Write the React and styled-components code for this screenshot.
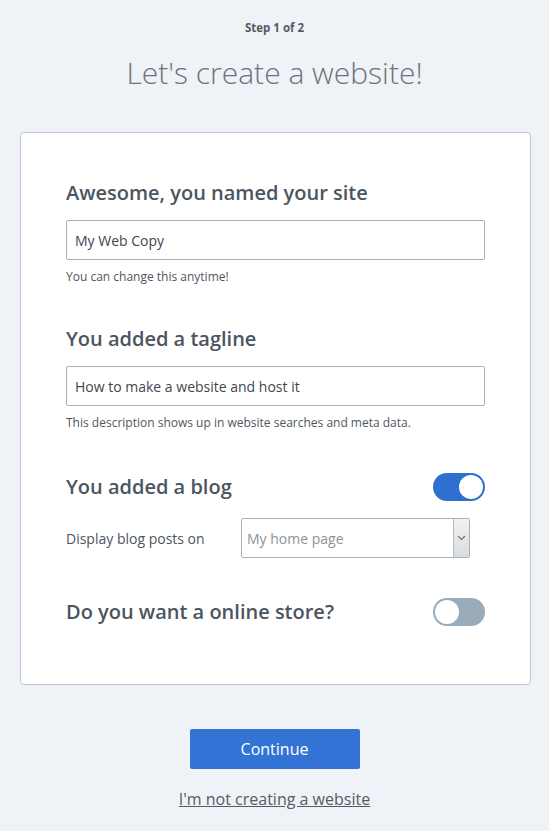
import React, { useState } from "react";
import styled, { createGlobalStyle } from "styled-components";

const GlobalStyle = createGlobalStyle`
  html, body {
    margin: 0;
    padding: 0;
    background: #eff2f6;
    font-family: "Open Sans", "Liberation Sans", sans-serif;
  }
`;

const App = () => {
  const [siteName, setSiteName] = useState("My Web Copy");
  const [tagline, setTagline] = useState("How to make a website and host it");
  const [blog, setBlog] = useState(true);
  const [store, setStore] = useState(false);

  return (
    <Page>
      <GlobalStyle />
      <StepLabel>Step 1 of 2</StepLabel>
      <Title>Let's create a website!</Title>

      <Card>
        <SectionTitle>Awesome, you named your site</SectionTitle>
        <TextInput
          value={siteName}
          onChange={(e) => setSiteName(e.target.value)}
        />
        <Hint>You can change this anytime!</Hint>

        <SectionTitle $spaced>You added a tagline</SectionTitle>
        <TextInput
          value={tagline}
          onChange={(e) => setTagline(e.target.value)}
        />
        <Hint>This description shows up in website searches and meta data.</Hint>

        <ToggleRow $top={41}>
          <SectionTitle>You added a blog</SectionTitle>
          <Toggle $on={blog} onClick={() => setBlog(!blog)} aria-label="Blog" />
        </ToggleRow>

        <SelectRow>
          <SelectLabel>Display blog posts on</SelectLabel>
          <SelectBox>
            <SelectValue>My home page</SelectValue>
            <SelectButton>
              <svg width="9" height="6" viewBox="0 0 9 6">
                <path
                  d="M1 1l3.5 3.5L8 1"
                  fill="none"
                  stroke="#6b7480"
                  strokeWidth="1.2"
                />
              </svg>
            </SelectButton>
          </SelectBox>
        </SelectRow>

        <ToggleRow $top={40}>
          <SectionTitle>Do you want a online store?</SectionTitle>
          <Toggle
            $on={store}
            onClick={() => setStore(!store)}
            aria-label="Online store"
          />
        </ToggleRow>
      </Card>

      <ContinueButton>Continue</ContinueButton>
      <SkipLink href="#">I'm not creating a website</SkipLink>
    </Page>
  );
};

const Page = styled.div`
  display: flex;
  flex-direction: column;
  align-items: center;
  padding: 20px 0 24px;
`;

const StepLabel = styled.div`
  font-size: 11.5px;
  line-height: 16px;
  font-weight: 700;
  color: #555b62;
`;

const Title = styled.h1`
  margin: 18px 0 0;
  font-size: 30px;
  line-height: 38px;
  font-weight: 300;
  color: #6c737c;
`;

const Card = styled.div`
  box-sizing: border-box;
  align-self: flex-start;
  width: 511px;
  margin: 40px 0 0 20px;
  padding: 46px 45px 58px 45px;
  background: #fff;
  border: 1px solid #bcc6d0;
  border-radius: 4px;
`;

const SectionTitle = styled.h2`
  margin: ${(p) => (p.$spaced ? "39px" : "0")} 0 0;
  font-size: 20px;
  line-height: 28px;
  font-weight: 600;
  color: #4b5560;
`;

const TextInput = styled.input`
  display: block;
  box-sizing: border-box;
  width: 100%;
  height: 40px;
  margin-top: 13px;
  padding: 0 8px;
  border: 1px solid #a9b0b7;
  border-radius: 2px;
  font-family: inherit;
  font-size: 14px;
  color: #3f464d;
  outline: none;
`;

const Hint = styled.div`
  margin-top: 8px;
  font-size: 12px;
  line-height: 18px;
  color: #4e5760;
`;

const ToggleRow = styled.div`
  display: flex;
  align-items: center;
  justify-content: space-between;
  height: 28px;
  margin-top: ${(p) => p.$top}px;
`;

const Toggle = styled.button`
  position: relative;
  width: 52px;
  height: 28px;
  padding: 0;
  border: none;
  border-radius: 14px;
  background: ${(p) => (p.$on ? "#2f6fd0" : "#9aabb9")};
  cursor: pointer;

  &::after {
    content: "";
    position: absolute;
    top: 2px;
    left: ${(p) => (p.$on ? "26px" : "2px")};
    width: 24px;
    height: 24px;
    box-sizing: border-box;
    border-radius: 50%;
    background: #fff;
  }
`;

const SelectRow = styled.div`
  display: flex;
  align-items: center;
  margin-top: 17px;
`;

const SelectLabel = styled.div`
  width: 175px;
  font-size: 14px;
  color: #4b5560;
`;

const SelectBox = styled.div`
  display: flex;
  width: 229px;
  height: 40px;
  box-sizing: border-box;
  border: 1px solid #aab1b8;
  border-radius: 2px;
  background: #fff;
`;

const SelectValue = styled.div`
  flex: 1;
  display: flex;
  align-items: center;
  padding-left: 5px;
  font-size: 14px;
  color: #8c939a;
`;

const SelectButton = styled.div`
  width: 15px;
  display: flex;
  align-items: center;
  justify-content: center;
  border-left: 1px solid #b4b9be;
  background: linear-gradient(#f2f2f2, #d9dcdf);
`;

const ContinueButton = styled.button`
  width: 170px;
  height: 40px;
  margin-top: 44px;
  border: none;
  border-radius: 2px;
  background: #3373d6;
  color: #fff;
  font-family: inherit;
  font-size: 16px;
  cursor: pointer;
`;

const SkipLink = styled.a`
  margin-top: 19px;
  font-size: 16px;
  line-height: 22px;
  color: #545b63;
  text-decoration: underline;
`;

export default App;
